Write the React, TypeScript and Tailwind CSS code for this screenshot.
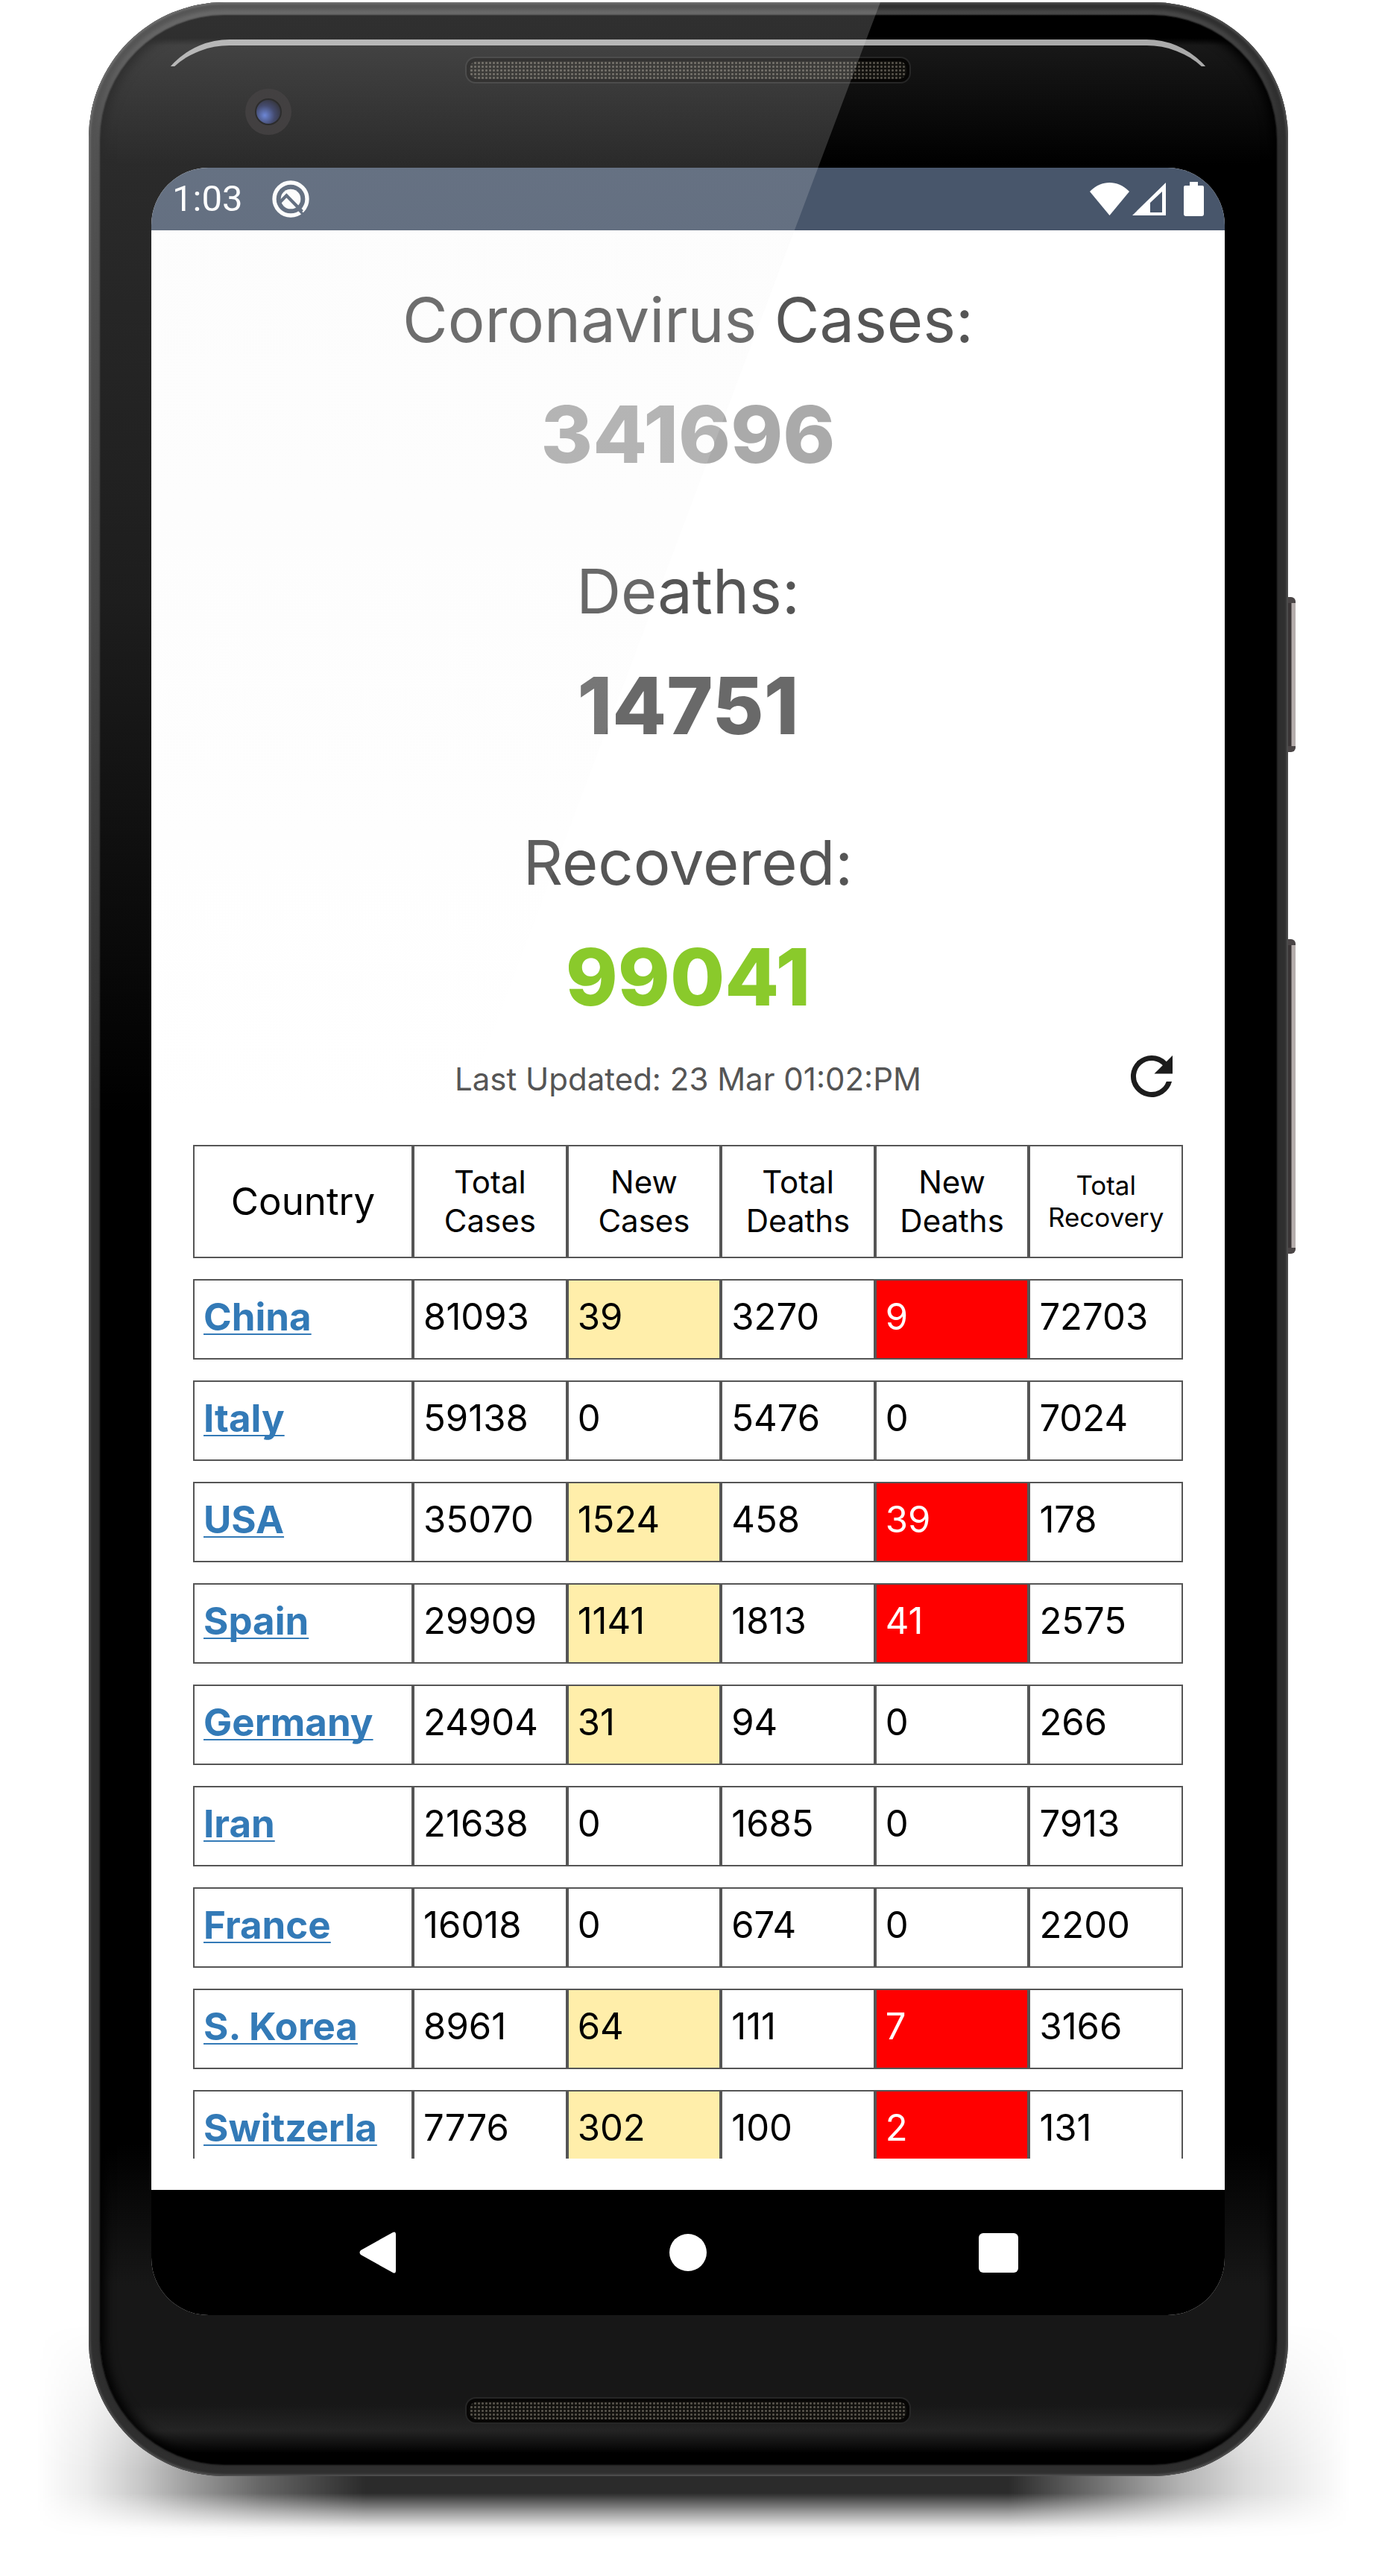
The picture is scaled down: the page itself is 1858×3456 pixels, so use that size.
type Row = {
  country: string;
  cases: number;
  newCases: number;
  deaths: number;
  newDeaths: number;
  recovery: number;
};

const rows: Row[] = [
  { country: "China", cases: 81093, newCases: 39, deaths: 3270, newDeaths: 9, recovery: 72703 },
  { country: "Italy", cases: 59138, newCases: 0, deaths: 5476, newDeaths: 0, recovery: 7024 },
  { country: "USA", cases: 35070, newCases: 1524, deaths: 458, newDeaths: 39, recovery: 178 },
  { country: "Spain", cases: 29909, newCases: 1141, deaths: 1813, newDeaths: 41, recovery: 2575 },
  { country: "Germany", cases: 24904, newCases: 31, deaths: 94, newDeaths: 0, recovery: 266 },
  { country: "Iran", cases: 21638, newCases: 0, deaths: 1685, newDeaths: 0, recovery: 7913 },
  { country: "France", cases: 16018, newCases: 0, deaths: 674, newDeaths: 0, recovery: 2200 },
  { country: "S. Korea", cases: 8961, newCases: 64, deaths: 111, newDeaths: 7, recovery: 3166 },
  { country: "Switzerla", cases: 7776, newCases: 302, deaths: 100, newDeaths: 2, recovery: 131 },
];

function Grille() {
  return (
    <div className="h-9 w-[598px] rounded-[14px] border-2 border-[#262626] bg-[#070605] p-1">
      <div className="h-full rounded-[10px] bg-[radial-gradient(circle,#57534b_1px,#12110e_2px)] bg-[size:5px_5px]" />
    </div>
  );
}

function StatusBar() {
  return (
    <div className="flex h-[84px] items-center bg-[#48566b] px-7 text-white">
      <span className="font-[Roboto,sans-serif] text-[49px] leading-[60px]">1:03</span>
      <svg viewBox="-75 -75 150 150" className="ml-10 h-[50px] w-[50px]" aria-hidden="true">
        <circle r="66" fill="none" stroke="#fff" strokeWidth="16" />
        <circle r="40" fill="#fff" />
        <path d="M-46 16L-17 -14L46 50" fill="none" stroke="#48566b" strokeWidth="13" />
        <path d="M28 38L64 78" stroke="#48566b" strokeWidth="10" />
      </svg>
      <svg viewBox="0 0 53 46" className="ml-auto h-[46px] w-[53px]" aria-hidden="true">
        <path d="M0 13C15-3 38-3 53 13L26.500 45Z" fill="#fff" />
      </svg>
      <svg viewBox="0 0 45 46" className="ml-1 h-[46px] w-[45px]" aria-hidden="true">
        <path fillRule="evenodd" d="M45 1V45H0ZM40 13L24 28V41H40Z" fill="#fff" />
      </svg>
      <svg viewBox="0 0 27 46" className="ml-6 h-[46px] w-[27px]" aria-hidden="true">
        <path d="M8 0H19V5H25Q27 5 27 7V43Q27 46 24 46H3Q0 46 0 43V7Q0 5 2 5H8Z" fill="#fff" />
      </svg>
    </div>
  );
}

function Stat({ label, value, tone }: { label: string; value: string; tone: string }) {
  return (
    <div className="flex flex-col gap-[34px] text-center">
      <h2 className="text-[83px] leading-[102px] text-[#555]">{label}</h2>
      <p className={`text-[106px] leading-[138px] font-extrabold ${tone}`}>{value}</p>
    </div>
  );
}

const cell = "h-[108px] border-2 border-[#555] p-3 align-top text-[49px] leading-[74px]";
const head = "h-[152px] border-2 border-[#555] p-0 text-center align-middle font-normal";

function CountryTable() {
  return (
    <table className="w-full table-fixed border-separate border-spacing-x-0 border-spacing-y-7 text-black">
      <colgroup>
        <col className="w-[22.22%]" />
        <col />
        <col />
        <col />
        <col />
        <col />
      </colgroup>
      <thead>
        <tr>
          <th scope="col" className={`${head} text-[51px] leading-[60px]`}>Country</th>
          <th scope="col" className={`${head} text-[42px] leading-[52px]`}>Total<br />Cases</th>
          <th scope="col" className={`${head} text-[42px] leading-[52px]`}>New<br />Cases</th>
          <th scope="col" className={`${head} text-[42px] leading-[52px]`}>Total<br />Deaths</th>
          <th scope="col" className={`${head} text-[42px] leading-[52px]`}>New<br />Deaths</th>
          <th scope="col" className={`${head} text-[35px] leading-[43px]`}>Total<br />Recovery</th>
        </tr>
      </thead>
      <tbody>
        {rows.map((r) => (
          <tr key={r.country}>
            <td className={cell}>
              <a
                href="#"
                className="text-[51px] font-bold text-[#337ab7] underline decoration-2 underline-offset-4 [text-decoration-skip-ink:none]"
              >
                {r.country}
              </a>
            </td>
            <td className={cell}>{r.cases}</td>
            <td className={`${cell} ${r.newCases > 0 ? "bg-[#ffeeaa]" : ""}`}>{r.newCases}</td>
            <td className={cell}>{r.deaths}</td>
            <td className={`${cell} ${r.newDeaths > 0 ? "bg-[#ff0000] text-white" : ""}`}>{r.newDeaths}</td>
            <td className={cell}>{r.recovery}</td>
          </tr>
        ))}
      </tbody>
    </table>
  );
}

function NavBar() {
  return (
    <nav className="flex h-[168px] items-center justify-between bg-black px-[264px]">
      <button type="button" aria-label="Back" className="flex h-[84px] w-20 items-center justify-center">
        <svg viewBox="0 0 50 56" className="h-[56px] w-[50px]" aria-hidden="true">
          <path d="M45 1Q49-1 49 4V52Q49 57 45 55L2 31Q-1 28 2 25Z" fill="#fff" />
        </svg>
      </button>
      <button type="button" aria-label="Home" className="flex h-[84px] w-20 items-center justify-center">
        <span className="h-[50px] w-[50px] rounded-full bg-white" />
      </button>
      <button type="button" aria-label="Recent apps" className="flex h-[84px] w-20 items-center justify-center">
        <span className="h-[53px] w-[53px] rounded-md bg-white" />
      </button>
    </nav>
  );
}

function Screen() {
  return (
    <div className="overflow-hidden rounded-[77px] bg-white">
      <StatusBar />
      <main className="px-14 pt-[69px] pb-[42px] font-[Inter,sans-serif]">
        <div className="flex flex-col gap-[90px]">
          <Stat label="Coronavirus Cases:" value="341696" tone="text-[#aaa]" />
          <Stat label="Deaths:" value="14751" tone="text-[#696969]" />
          <Stat label="Recovered:" value="99041" tone="text-[#8aca2b]" />
        </div>
        <div className="mt-[22px] grid grid-cols-[84px_1fr_84px] items-end">
          <span />
          <p className="text-center text-[42px] leading-[76px] text-[#555]">Last Updated: 23 Mar 01:02:PM</p>
          <button type="button" aria-label="Refresh">
            <svg viewBox="0 0 24 24" className="block h-[84px] w-[84px]" aria-hidden="true">
              <path
                d="M17.650 6.350A7.960 7.960 0 0 0 12 4a8 8 0 1 0 7.730 10h-2.080A6 6 0 1 1 12 6c1.660 0 3.140.69 4.220 1.780L13 11h7V4z"
                fill="#1c1c1c"
              />
            </svg>
          </button>
        </div>
        <div className="mt-[22px] h-[1388px] overflow-hidden">
          <CountryTable />
        </div>
      </main>
      <NavBar />
    </div>
  );
}

export default function App() {
  return (
    <div className="min-h-screen overflow-hidden bg-white pt-[3px] pr-[130px] pb-[132px] pl-[119px]">
      <div className="relative isolate">
        {/* floor shadow */}
        <div className="absolute -right-[84px] -bottom-[84px] -left-[70px] -z-10 h-[290px] bg-[linear-gradient(to_right,transparent,rgba(0,0,0,0.08)_4%,rgba(0,0,0,0.22)_8%,rgba(0,0,0,0.4)_12%,rgba(0,0,0,0.6)_17%,rgba(0,0,0,0.83)_25%,rgba(0,0,0,0.83)_74%,rgba(0,0,0,0.55)_81%,rgba(0,0,0,0.3)_87%,rgba(0,0,0,0.14)_92%,transparent)] [mask-image:linear-gradient(to_bottom,transparent,black_68%,black_79%,rgba(0,0,0,0.45)_88%,rgba(0,0,0,0.08)_95%,transparent)]" />
        {/* side keys */}
        <div className="absolute top-[798px] -right-[10px] -z-10 h-[208px] w-5 overflow-hidden rounded-md border-y-8 border-[#4a4546] bg-[linear-gradient(to_right,#3a3536_70%,#b5adac_75%)]" />
        <div className="absolute top-[1257px] -right-[10px] -z-10 h-[422px] w-5 overflow-hidden rounded-md border-y-8 border-[#4a4546] bg-[linear-gradient(to_right,#3a3536_70%,#b5adac_75%)]" />

        {/* metal rim */}
        <div className="overflow-hidden rounded-[182px] bg-[linear-gradient(to_bottom,#4a4a4a,#2e2e2e_200px,#2e2e2e)] p-4 pt-[18px] shadow-[inset_0_0_3px_2px_#555,inset_0_0_4px_10px_#303030]">
          <div className="rounded-[166px] bg-[linear-gradient(to_bottom,#000_30px,#181818_40px,#000_200px,#000_calc(100%-430px),#171717_calc(100%-240px),#171717_calc(100%-80px),#242424_calc(100%-45px),#000_calc(100%-14px))] pr-[69px] pl-[68px] shadow-[0_0_2px_1px_#000,inset_0_0_14px_6px_#000]">
            <div className="relative flex h-[204px] justify-center pt-[55px]">
              <div className="absolute top-8 right-0 left-0 h-9 overflow-hidden">
                <div className="h-[220px] rounded-[105px] border-t-8 border-[#aaa]" />
              </div>
              <Grille />
              <div className="absolute top-[98px] left-[126px] flex h-[62px] w-[62px] items-center justify-center rounded-full bg-[#1b1819]">
                <div className="h-9 w-9 rounded-full border-2 border-black bg-[radial-gradient(circle_at_35%_65%,#4f6fd0,#1d2550_45%,#0b0b14_80%)]" />
              </div>
            </div>
            <Screen />
            <div className="flex h-[200px] justify-center pt-[110px]">
              <Grille />
            </div>
          </div>
        </div>

        {/* glass reflection */}
        <div className="pointer-events-none absolute inset-0 overflow-hidden rounded-[182px]">
          <div className="h-full bg-[linear-gradient(to_bottom,rgba(240,240,240,0.2),rgba(240,240,240,0.17)_300px,rgba(240,240,240,0.12)_800px,rgba(240,240,240,0)_1497px)] [clip-path:polygon(0_0,66%_0,31%_1497px,0_1497px)]" />
        </div>
      </div>
    </div>
  );
}
